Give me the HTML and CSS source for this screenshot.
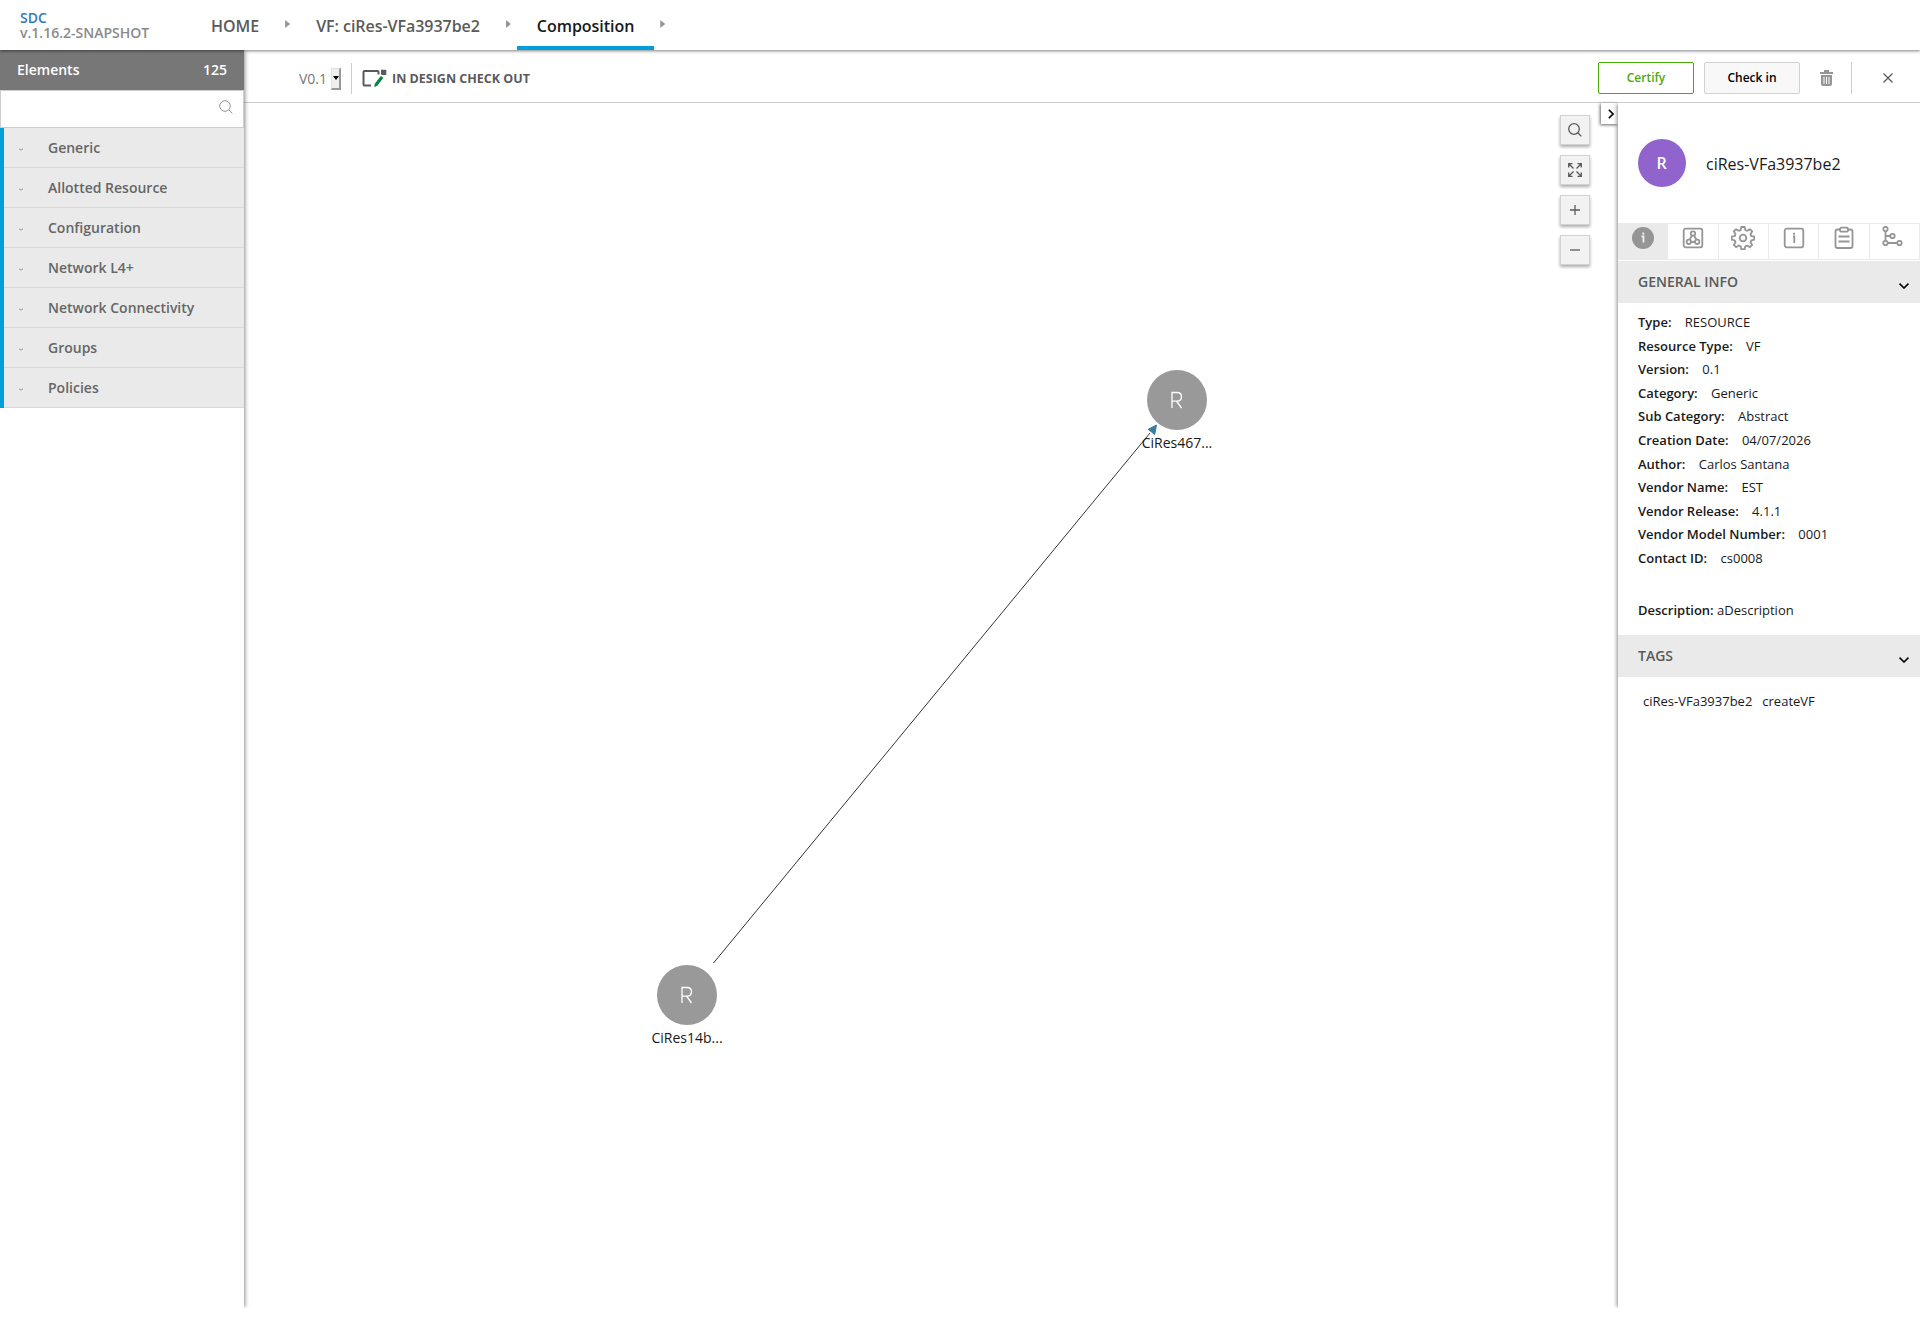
FILE: index.html
```
<!DOCTYPE html>
<html lang="en">
<head>
  <meta charset="UTF-8">
  <title>SDC</title>
  <link rel="stylesheet" href="styles.css">
</head>
<body>

  <!-- Top navigation -->
  <header class="top-nav">
    <div class="logo">
      <a class="logo-name">SDC</a>
      <div class="version">v.1.16.2-SNAPSHOT</div>
    </div>
    <nav class="crumbs">
      <a class="crumb">HOME</a>
      <span class="arrow"></span>
      <a class="crumb">VF: ciRes-VFa3937be2</a>
      <span class="arrow"></span>
      <a class="crumb active">Composition</a>
      <span class="arrow"></span>
    </nav>
  </header>

  <div class="workspace">

    <!-- Palette -->
    <aside class="palette">
      <div class="palette-title"><span>Elements</span><span>125</span></div>
      <div class="palette-search">
        <svg width="14" height="14" viewBox="0 0 14 14"><circle cx="6" cy="6" r="5.3"/><path d="M9.8 9.8l3.6 3.6"/></svg>
      </div>
      <ul class="palette-list">
        <li><svg width="4" height="3" viewBox="0 0 4 3"><path d="M0 .6L2 2.2 4 .6"/></svg>Generic</li>
        <li><svg width="4" height="3" viewBox="0 0 4 3"><path d="M0 .6L2 2.2 4 .6"/></svg>Allotted Resource</li>
        <li><svg width="4" height="3" viewBox="0 0 4 3"><path d="M0 .6L2 2.2 4 .6"/></svg>Configuration</li>
        <li><svg width="4" height="3" viewBox="0 0 4 3"><path d="M0 .6L2 2.2 4 .6"/></svg>Network L4+</li>
        <li><svg width="4" height="3" viewBox="0 0 4 3"><path d="M0 .6L2 2.2 4 .6"/></svg>Network Connectivity</li>
        <li><svg width="4" height="3" viewBox="0 0 4 3"><path d="M0 .6L2 2.2 4 .6"/></svg>Groups</li>
        <li><svg width="4" height="3" viewBox="0 0 4 3"><path d="M0 .6L2 2.2 4 .6"/></svg>Policies</li>
      </ul>
    </aside>

    <main class="main">
      <!-- Version, status and actions -->
      <div class="toolbar">
        <span class="ver">V0.1</span>
        <span class="ver-select"></span>
        <span class="status">
          <svg width="25" height="19" viewBox="0 0 25 19">
            <path d="M16.5 5.500V3q0-1-1-1H2.500q-1 0-1 1v12.500q0 1 1 1H9" fill="none" stroke="#5a5a5a" stroke-width="2"/>
            <path d="M19 .8h4.500q.8 0 .8.800V6h-4q-1.300 0-1.300-1.300z" fill="#5a5a5a"/>
            <path d="M18.800 7l2.600 1.800-5.900 7.700-3.200 1.700.5-3.500z" fill="#0b8043"/>
          </svg>
          IN DESIGN CHECK OUT
        </span>
        <div class="actions">
          <button class="btn certify">Certify</button>
          <button class="btn checkin">Check in</button>
          <svg class="trash" width="13" height="16" viewBox="0 0 13 16">
            <path d="M0 2h4V0h5v2h4v2H0zM1 5h11v9q0 2-2 2H3q-2 0-2-2z" fill="#959595"/>
            <path d="M4 7v7M6.500 7v7M9 7v7" stroke="#fff" fill="none"/>
          </svg>
          <span class="divider"></span>
          <svg class="close" width="10" height="10" viewBox="0 0 10 10"><path d="M.5.5l9 9M9.500.5l-9 9"/></svg>
        </div>
      </div>

      <div class="content">
        <!-- Composition graph -->
        <div class="canvas">
          <svg class="graph" width="1374" height="1216" viewBox="244 103 1374 1216">
            <path d="M713.500 963L1150 433" stroke="#333" stroke-width="1"/>
            <path d="M1156.500 425l-1.800 9.500-6.500-5.200z" fill="#3a7d9f" stroke="#3a7d9f"/>
            <circle cx="1177" cy="400" r="30"/>
            <path class="node-icon" d="M1172 408v-15.500h5q4.500 0 4.500 4.300t-4.500 4.300h-5M1176.500 401l5 7"/>
            <text x="1177" y="448">CiRes467...</text>
            <circle cx="687" cy="995" r="30"/>
            <path class="node-icon" d="M682 1003v-15.500h5q4.500 0 4.500 4.300t-4.500 4.300h-5M686.500 996l5 7"/>
            <text x="687" y="1043">CiRes14b...</text>
          </svg>
          <div class="zoom-tools">
            <span class="tool"><svg width="14" height="14" viewBox="0 0 14 14"><circle cx="6" cy="6" r="5.300"/><path d="M9.800 9.800l3.600 3.600"/></svg></span>
            <span class="tool"><svg width="14" height="14" viewBox="0 0 14 14"><path d="M.7 4.500V.7h3.800M9.500.7h3.800v3.800M13.300 9.500v3.800H9.500M4.500 13.300H.7V9.500M1 1l4.500 4.500M13 1L8.500 5.500M13 13L8.500 8.500M1 13l4.500-4.500"/></svg></span>
            <span class="tool"><svg width="10" height="10" viewBox="0 0 10 10"><path d="M5 0v10M0 5h10"/></svg></span>
            <span class="tool"><svg width="10" height="10" viewBox="0 0 10 10"><path d="M0 5h10"/></svg></span>
          </div>
          <span class="collapse"><svg width="6" height="10" viewBox="0 0 6 10"><path d="M.8.800L5 5 .8 9.200"/></svg></span>
        </div>

        <!-- Details panel -->
        <aside class="details">
          <div class="details-head">
            <span class="avatar">R</span>
            <span class="details-name">ciRes-VFa3937be2</span>
          </div>
          <div class="tabs">
            <span class="tab selected"><svg width="24" height="24" viewBox="0 0 24 24"><circle cx="12" cy="12" r="11" fill="#959595" stroke="none"/><path d="M10.500 10.500H12.500V16.500M12.300 6.500v2.200" stroke="#eee" stroke-width="1.800"/></svg></span>
            <span class="tab"><svg width="24" height="24" viewBox="0 0 24 24"><rect x="2.700" y="2.700" width="18.600" height="18.600" rx="2"/><circle cx="12" cy="7.500" r="2.200"/><circle cx="7.800" cy="15.800" r="2.200"/><circle cx="16.200" cy="15.800" r="2.200"/><path d="M11 9.500l-2.400 4.300M13 9.500l2.400 4.300M10 16h4"/></svg></span>
            <span class="tab"><svg width="24" height="24" viewBox="0 0 24 24"><circle cx="12" cy="12" r="3.300"/><path d="M10.300 1h3.400l.6 3 1.900.8 2.700-1.600 2.300 2.300-1.700 2.600.8 2 3 .4v3.200l-3 .6-.8 2 1.700 2.600-2.300 2.300-2.700-1.700-1.900.8-.6 2.900h-3.400l-.6-2.900-1.900-.8-2.700 1.700-2.300-2.300 1.700-2.600-.8-2-3-.6v-3.200l3-.4.8-2-1.700-2.600 2.300-2.300 2.700 1.600 1.900-.8z" stroke-linejoin="round"/></svg></span>
            <span class="tab"><svg width="24" height="24" viewBox="0 0 24 24"><rect x="2.700" y="2.700" width="18.600" height="18.600" rx="2"/><path d="M11 10.500h1.300V17M12 6.700v2"/></svg></span>
            <span class="tab"><svg width="24" height="24" viewBox="0 0 24 24"><path d="M8 3.500H5.500q-2 0-2 2V20q0 2 2 2h13q2 0 2-2V5.500q0-2-2-2H16"/><rect x="8" y="1.700" width="8" height="4" rx="1.500"/><path d="M6.500 10.500h11M6.500 15.500h11"/></svg></span>
            <span class="tab"><svg width="24" height="24" viewBox="0 0 24 24"><circle cx="3.500" cy="3" r="2.200"/><circle cx="3.500" cy="17" r="2.200"/><circle cx="10.500" cy="10" r="2.200"/><circle cx="17.500" cy="17" r="2.200"/><path d="M3.500 5.200v9.600M5.700 17h9.600M3.500 10h4.800"/></svg></span>
          </div>

          <div class="section-title">GENERAL INFO<svg width="10" height="6" viewBox="0 0 10 6"><path d="M.5.700L5 5 9.500.700"/></svg></div>
          <div class="info">
            <div class="row"><b>Type:</b><span>RESOURCE</span></div>
            <div class="row"><b>Resource Type:</b><span>VF</span></div>
            <div class="row"><b>Version:</b><span>0.1</span></div>
            <div class="row"><b>Category:</b><span>Generic</span></div>
            <div class="row"><b>Sub Category:</b><span>Abstract</span></div>
            <div class="row"><b>Creation Date:</b><span>04/07/2026</span></div>
            <div class="row"><b>Author:</b><span>Carlos Santana</span></div>
            <div class="row"><b>Vendor Name:</b><span>EST</span></div>
            <div class="row"><b>Vendor Release:</b><span>4.1.1</span></div>
            <div class="row"><b>Vendor Model Number:</b><span>0001</span></div>
            <div class="row"><b>Contact ID:</b><span>cs0008</span></div>
            <div class="description"><b>Description:</b> aDescription</div>
          </div>

          <div class="section-title">TAGS<svg width="10" height="6" viewBox="0 0 10 6"><path d="M.5.700L5 5 9.500.700"/></svg></div>
          <div class="tags"><span>ciRes-VFa3937be2</span><span>createVF</span></div>
        </aside>
      </div>
    </main>
  </div>

</body>
</html>
```
FILE: styles.css
```
* {
  margin: 0;
  padding: 0;
  box-sizing: border-box;
}

body {
  font-family: 'Open Sans', sans-serif;
  font-size: 13px;
  color: #191919;
  background: #fff;
  height: 1319px;
  overflow: hidden;
}

svg {
  flex: none;
  fill: none;
}

b {
  font-weight: 600;
}

.top-nav {
  position: relative;
  z-index: 3;
  display: flex;
  height: 50px;
  background: #fff;
  box-shadow: 0 1px 3px rgba(0, 0, 0, 0.5);
}

.logo {
  width: 191px;
  padding: 10px 0 0 20px;
  font-size: 14px;
  font-weight: 600;
  line-height: 15px;
  color: #8a8a8a;
}

.logo-name {
  display: block;
  color: #337ab7;
}

.crumbs {
  display: flex;
}

.crumb {
  height: 50px;
  padding: 0 20px;
  font-size: 16px;
  font-weight: 600;
  line-height: 53px;
  letter-spacing: -0.04px;
  color: #5a5a5a;
}

.crumb.active {
  color: #191919;
  border-bottom: 4px solid #009fdb;
}

.arrow {
  width: 5px;
  height: 8px;
  margin: 20px 6px 0;
  background: #959595;
  clip-path: polygon(0 0, 100% 50%, 0 100%);
}

.workspace {
  display: flex;
}

.palette {
  position: relative;
  z-index: 2;
  width: 244px;
  height: 1258px;
  background: #fff;
  box-shadow: 2px 0 4px -1px rgba(0, 0, 0, 0.45);
  clip-path: inset(0 -10px 0 0);
}

.palette-title {
  display: flex;
  justify-content: space-between;
  height: 40px;
  padding: 0 17px;
  font-size: 14px;
  font-weight: 600;
  line-height: 40px;
  color: #fff;
  background: #777;
}

.palette-search {
  display: flex;
  justify-content: flex-end;
  height: 38px;
  padding: 9px 10px;
  border: 1px solid #cdcdcd;
}

.palette-search svg {
  stroke: #959595;
}

.palette-list {
  list-style: none;
}

.palette-list li {
  display: flex;
  align-items: center;
  height: 40px;
  padding: 0 0 2px 15px;
  font-size: 14px;
  font-weight: 600;
  color: #666;
  background: #eaeaea;
  border-left: 4px solid #009fdb;
  box-shadow: inset 0 -1px 1px #d8d8d8;
}

.palette-list svg {
  margin: 4px 25px 0 0;
  stroke: #959595;
}

.main {
  flex: 1;
}

.toolbar {
  display: flex;
  align-items: center;
  height: 53px;
  padding: 3px 27px 0 55px;
  border-bottom: 1px solid #cdcdcd;
}

.ver {
  width: 32px;
  padding-top: 2px;
  font-size: 14px;
  color: #777;
}

.ver-select {
  display: flex;
  align-items: center;
  justify-content: center;
  width: 10px;
  height: 22px;
  margin-top: 2px;
  background: #efefef;
  border: 1px solid #e3e3e3;
  border-right: 2px solid #999;
  border-bottom: 2px solid #999;
}

.ver-select::after {
  content: '';
  border: 3px solid transparent;
  border-top: 4px solid #000;
  border-bottom: 0;
}

.status {
  display: flex;
  align-items: center;
  gap: 5px;
  height: 31px;
  margin-top: 2px;
  margin-left: 10px;
  padding-left: 10px;
  font-size: 12.500px;
  font-weight: 700;
  color: #5a5a5a;
  border-left: 1px solid #cdcdcd;
}

.actions {
  display: flex;
  align-items: center;
  margin-left: auto;
}

.btn {
  width: 96px;
  height: 32px;
  margin-right: 10px;
  font-family: inherit;
  font-size: 12px;
  font-weight: 600;
  border-radius: 2px;
}

.certify {
  color: #4ca90c;
  background: #fff;
  border: 1px solid #4ca90c;
}

.checkin {
  color: #000;
  background: #f8f8f8;
  border: 1px solid #d2d2d2;
}

.trash {
  margin: 0 18px 0 10px;
}

.divider {
  width: 1px;
  height: 32px;
  margin-right: 31px;
  background: #cdcdcd;
}

.close {
  stroke: #5a5a5a;
  stroke-width: 1.3;
}

.content {
  display: flex;
}

.canvas {
  position: relative;
  flex: 1;
  height: 1216px;
}

.graph {
  display: block;
}

.graph circle {
  fill: #999;
}

.graph text {
  font-size: 14px;
  text-anchor: middle;
  fill: #191919;
}

.node-icon {
  stroke: #fff;
  stroke-width: 1.3;
}

/* floating controls over the graph */
.zoom-tools {
  position: absolute;
  top: 12px;
  right: 28px;
  display: flex;
  flex-direction: column;
  gap: 10px;
}

.tool {
  display: flex;
  align-items: center;
  justify-content: center;
  width: 30px;
  height: 30px;
  background: #f2f2f2;
  border: 1px solid #d2d2d2;
  box-shadow: 0 2px 3px rgba(0, 0, 0, 0.33);
}

.tool svg {
  stroke: #5a5a5a;
  stroke-width: 1.3;
}

.collapse {
  position: absolute;
  top: 0;
  right: 0;
  display: flex;
  align-items: center;
  justify-content: center;
  width: 17px;
  height: 21px;
  padding: 1px 0 0 3px;
  background: #fff;
  box-shadow: -1px 1px 3px rgba(0, 0, 0, 0.6);
}

.collapse svg {
  stroke: #000;
  stroke-width: 1.6;
}

.details {
  position: relative;
  width: 302px;
  height: 1205px;
  background: #fff;
  box-shadow: -2px 0 4px -1px rgba(0, 0, 0, 0.45);
  clip-path: inset(0 0 0 -10px);
}

.details-head {
  display: flex;
  align-items: center;
  gap: 20px;
  height: 120px;
  padding-left: 20px;
  font-size: 16px;
}

.details-name {
  padding-top: 2px;
}

.avatar {
  width: 48px;
  height: 48px;
  padding-right: 1px;
  font-weight: 600;
  line-height: 48px;
  text-align: center;
  color: #fff;
  background: #9063cd;
  border-radius: 50%;
}

.tabs {
  display: flex;
  height: 37px;
  margin-bottom: 1px;
  border-top: 1px solid #eaeaea;
  border-bottom: 1px solid #eaeaea;
}

.tab {
  display: flex;
  flex: 1;
  justify-content: center;
  padding-top: 2px;
  border-right: 1px solid #eaeaea;
}

.tab svg {
  stroke: #959595;
  stroke-width: 1.8;
}

.selected {
  background: #eaeaea;
}

.section-title {
  display: flex;
  align-items: center;
  justify-content: space-between;
  height: 42px;
  padding: 0 11px 2px 20px;
  font-size: 14px;
  font-weight: 600;
  color: #5a5a5a;
  background: #eaeaea;
}

.section-title svg {
  margin-top: 10px;
  stroke: #000;
  stroke-width: 1.6;
}

.info {
  height: 332px;
  padding: 8px 20px 0;
}

.row {
  display: flex;
  gap: 13.4px;
  height: 23.6px;
  line-height: 23.6px;
}

.description {
  margin-top: 28px;
  line-height: 23px;
}

.tags {
  display: flex;
  gap: 10px;
  padding: 15px 25px;
}
```
